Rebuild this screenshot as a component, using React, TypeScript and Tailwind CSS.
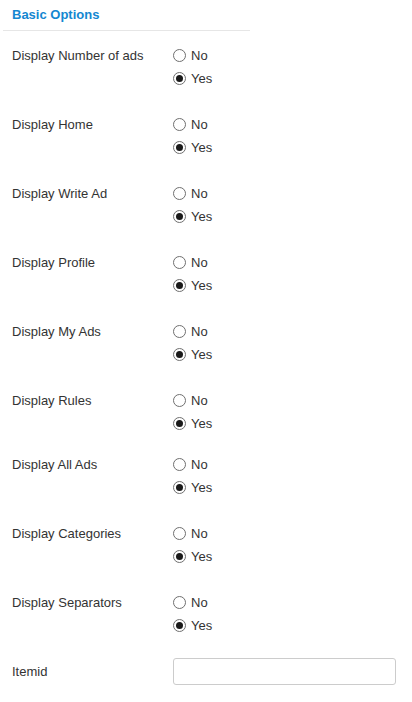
import React from "react"

const rows = [
  { label: "Display Number of ads", gap: "mb-[23px]" },
  { label: "Display Home", gap: "mb-[23px]" },
  { label: "Display Write Ad", gap: "mb-[23px]" },
  { label: "Display Profile", gap: "mb-[23px]" },
  { label: "Display My Ads", gap: "mb-[23px]" },
  { label: "Display Rules", gap: "mb-[18px]" },
  { label: "Display All Ads", gap: "mb-[23px]" },
  { label: "Display Categories", gap: "mb-[23px]" },
  { label: "Display Separators", gap: "mb-[23px]" },
]

const Radio: React.FC<{ checked?: boolean; text: string }> = ({ checked, text }) => (
  <label className="flex items-center h-[23px] gap-[5px]">
    <span className="w-[13px] h-[13px] rounded-full border border-[#6f6f6f] bg-white flex items-center justify-center">
      {checked && <span className="w-[7px] h-[7px] rounded-full bg-[#1a1a1a]" />}
    </span>
    <span>{text}</span>
  </label>
)

const App: React.FC = () => {
  return (
    <div className="w-[412px] h-[702px] bg-white text-[13px] text-[#333] font-['Liberation_Sans',Arial,sans-serif]">
      <div className="ml-[3px] w-[247px] border-b border-[#e6e6e6] pl-[9px] pt-[6px] pb-[6px]">
        <h3 className="font-bold text-[#1487d1] leading-[18px]">Basic Options</h3>
      </div>
      <div className="pt-[13px] pl-[12px]">
        {rows.map((r, i) => (
          <div key={`opt-${i}`} className={`flex ${r.gap}`}>
            <div className="w-[161px] h-[23px] flex items-center">{r.label}</div>
            <div className="flex flex-col">
              <Radio text="No" />
              <Radio text="Yes" checked />
            </div>
          </div>
        ))}
        <div className="flex items-center h-[27px] -mt-[2px]">
          <div className="w-[161px]">Itemid</div>
          <input
            type="text"
            className="w-[223px] h-[27px] border border-[#cccccc] rounded-[3px] bg-white px-2 outline-none"
          />
        </div>
      </div>
    </div>
  )
}

export default App
